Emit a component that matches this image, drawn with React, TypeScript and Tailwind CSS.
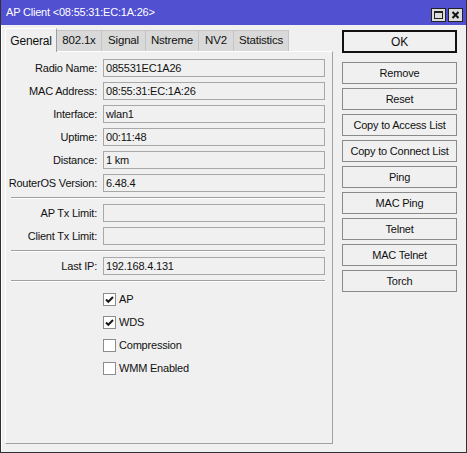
import React from 'react';

const font = { fontFamily: '"Liberation Sans", Arial, sans-serif' };

const tabs = [
    { name: 'General', w: 'w-[52px]' },
    { name: '802.1x', w: 'w-[45px]' },
    { name: 'Signal', w: 'w-[44px]' },
    { name: 'Nstreme', w: 'w-[53px]' },
    { name: 'NV2', w: 'w-[35px]' },
    { name: 'Statistics', w: 'w-[55px]' },
];

const infoRows = [
    { label: 'Radio Name:', value: '085531EC1A26' },
    { label: 'MAC Address:', value: '08:55:31:EC:1A:26' },
    { label: 'Interface:', value: 'wlan1' },
    { label: 'Uptime:', value: '00:11:48' },
    { label: 'Distance:', value: '1 km' },
    { label: 'RouterOS Version:', value: '6.48.4' },
];

const checks = [
    { label: 'AP', on: true },
    { label: 'WDS', on: true },
    { label: 'Compression', on: false },
    { label: 'WMM Enabled', on: false },
];

const actions = ['Remove', 'Reset', 'Copy to Access List', 'Copy to Connect List', 'Ping', 'MAC Ping', 'Telnet', 'MAC Telnet', 'Torch'];

const Field: React.FC<{ label: string; value?: string }> = ({ label, value }) => (
    <div className="flex items-center h-[18px]">
        <div className="w-[94px] pr-[3px] text-right whitespace-nowrap">{label}</div>
        <div className="ml-[3px] w-[222px] h-[18px] border border-[#a8a8a8] bg-[#f0f0f0] px-[2px] leading-[16px] whitespace-nowrap">
            {value}
        </div>
    </div>
);

const Separator = () => (
    <div className="ml-[5px] w-[314px] h-[2px] border-t border-[#a0a0a0] border-b border-b-white" />
);

const CheckBox: React.FC<{ label: string; on: boolean }> = ({ label, on }) => (
    <div className="flex items-center h-[18px] pl-[97px]">
        <div className="w-[13px] h-[13px] border border-[#8c8c8c] bg-white flex items-center justify-center">
            {on && (
                <svg width="9" height="9" viewBox="0 0 9 9">
                    <path d="M1 4.5 L3.3 6.8 L8 2" fill="none" stroke="#1a1a1a" strokeWidth="2" />
                </svg>
            )}
        </div>
        <span className="ml-[3px]">{label}</span>
    </div>
);

const App: React.FC = () => {
    return (
        <div style={font} className="w-[467px] h-[453px] bg-[#f0f0f0] text-[11px] text-[#111] tracking-[-0.2px] flex flex-col border-x border-b border-[#303030] overflow-hidden">
            {/* title bar */}
            <div className="h-[25px] bg-[#5050d0] flex items-center pl-[5px] pr-[3px] shrink-0">
                <span className="text-white flex-1">AP Client &lt;08:55:31:EC:1A:26&gt;</span>
                <div className="flex gap-[2px] mt-[4px]">
                    <div className="w-[15px] h-[14px] bg-[#dcdcdc] border border-[#222] flex items-center justify-center">
                        <div className="w-[9px] h-[8px] border border-[#222] border-t-2" />
                    </div>
                    <div className="w-[15px] h-[14px] bg-[#dcdcdc] border border-[#222] flex items-center justify-center">
                        <svg width="9" height="8" viewBox="0 0 9 8">
                            <path d="M1.5 1 L7.5 7 M7.5 1 L1.5 7" stroke="#111" strokeWidth="2" />
                        </svg>
                    </div>
                </div>
            </div>

            <div className="flex flex-1 pl-[3px] border-l border-white">
                {/* left: tabs + panel */}
                <div className="flex flex-col w-[328px] pb-[8px]">
                    <div className="flex items-end h-[26px]">
                        {tabs.map((t, i) =>
                            i === 0 ? (
                                <div key={t.name} className={`${t.w} h-[24px] flex items-center justify-center bg-[#f0f0f0] border-t border-l border-white border-r border-r-[#a0a0a0] text-[12px] -mb-[1px] relative z-10`}>
                                    {t.name}
                                </div>
                            ) : (
                                <div key={t.name} className={`${t.w} h-[21px] flex items-center justify-center bg-[#d9d9d9] border-t border-r border-[#c4c4c4] text-[11.5px]`}>
                                    {t.name}
                                </div>
                            )
                        )}
                    </div>
                    <div className="flex-1 border-t border-l border-white border-r border-b border-r-[#a0a0a0] border-b-[#a0a0a0] pt-[7px] flex flex-col gap-[5px]">
                        {infoRows.map(r => <Field key={r.label} label={r.label} value={r.value} />)}
                        <Separator />
                        <Field label="AP Tx Limit:" />
                        <Field label="Client Tx Limit:" />
                        <Separator />
                        <Field label="Last IP:" value="192.168.4.131" />
                        <Separator />
                        <div className="flex flex-col gap-[5px] mt-[3px]">
                            {checks.map(c => <CheckBox key={c.label} label={c.label} on={c.on} />)}
                        </div>
                    </div>
                </div>

                {/* right: buttons */}
                <div className="ml-[9px] w-[115px] pt-[5px] flex flex-col">
                    <div className="h-[23px] border-2 border-[#111] flex items-center justify-center text-[12px] bg-[#f0f0f0]">OK</div>
                    <div className="mt-[9px] flex flex-col gap-[4px]">
                        {actions.map(a => (
                            <div key={a} className="h-[22px] border border-[#8a8a8a] bg-[#f0f0f0] flex items-center justify-center whitespace-nowrap">
                                {a}
                            </div>
                        ))}
                    </div>
                </div>
            </div>
        </div>
    );
};

export default App;
